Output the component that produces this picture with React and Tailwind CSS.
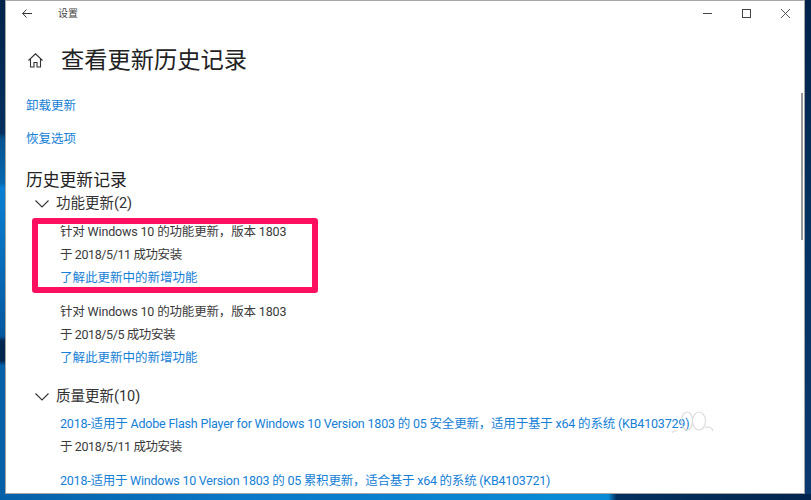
const FONT = "font-['Roboto','Noto_Sans_CJK_SC',sans-serif]";

function Link({ className = "", children }) {
    return <p className={`h-[23px] leading-[23px] text-[12.5px] text-[#1480d6] whitespace-nowrap ${className}`}>{children}</p>;
}

function Line({ className = "", children }) {
    return <p className={`h-[23px] leading-[23px] text-[12.5px] text-[#3a3a3a] whitespace-nowrap ${className}`}>{children}</p>;
}

function GroupTitle({ children }) {
    return (
        <div className="flex items-center h-6 pl-[29px] text-[#333] text-[14.5px]">
            <svg width="14" height="8" viewBox="0 0 14 8" fill="none" stroke="#333" strokeWidth="1.1" className="mr-[7px]">
                <path d="M0.5 0.5L7 7L13.5 0.5" />
            </svg>
            {children}
        </div>
    );
}

function App() {
    return (
        <div className={`flex flex-col w-[811px] h-[500px] overflow-hidden ${FONT}`}>
            <div className="flex h-[494px]">
                <div className="w-[5px] bg-[linear-gradient(to_bottom,#03234a_0%,#04305f_27%,#06528f_28%,#0668b0_37%,#0a80d4_38%,#05589f_68%,#03264f_69%,#03264f_73%,#0560a8_74%,#0560a8_100%)]" />
                <div className="relative flex-1 bg-white border border-[#a6a6a6]">
                    <div className="flex items-center h-6">
                        <svg width="10" height="9" viewBox="0 0 10 9" fill="none" stroke="#333" strokeWidth="1" className="ml-[16px]">
                            <path d="M4.5 0.5L0.7 4.5L4.5 8.5M0.7 4.5H10" />
                        </svg>
                        <span className="ml-[26px] text-[10px] text-[#444]">设置</span>
                        <div className="ml-auto flex items-center gap-[30px] pr-[14px]">
                            <svg width="9" height="9" viewBox="0 0 9 9" stroke="#444" strokeWidth="1"><path d="M0 4.5H9" /></svg>
                            <svg width="9" height="9" viewBox="0 0 9 9" fill="none" stroke="#444" strokeWidth="1"><rect x="0.5" y="0.5" width="8" height="8" /></svg>
                            <svg width="9" height="9" viewBox="0 0 9 9" stroke="#444" strokeWidth="0.9"><path d="M0 0L9 9M9 0L0 9" /></svg>
                        </div>
                    </div>
                    <div className="flex items-center mt-[19px] h-8 pl-[22px]">
                        <svg width="15" height="15" viewBox="0 0 15 15" fill="none" stroke="#333" strokeWidth="1.1">
                            <path d="M0.5 7.5L7.5 0.8L14.5 7.5M2.5 6V14H6V9.5H9V14H12.5V6" />
                        </svg>
                        <h1 className="ml-[18px] text-[23.25px] font-normal text-[#222]">查看更新历史记录</h1>
                    </div>
                    <div className="mt-[18px] pl-[20px] text-[12.5px] text-[#1480d6]">
                        <p className="h-[33px] leading-[23px]">卸载更新</p>
                        <p className="leading-[23px]">恢复选项</p>
                    </div>
                    <h2 className="mt-[18px] pl-[20px] text-[16.8px] leading-6 font-normal text-[#222]">历史更新记录</h2>
                    <GroupTitle>功能更新(2)</GroupTitle>
                    <div className="relative mt-[4px] ml-[54px]">
                        <Line className="tracking-[-0.16px]">针对 Windows 10 的功能更新，版本 1803</Line>
                        <Line className="tracking-[-0.4px]">于 2018/5/11 成功安装</Line>
                        <Link>了解此更新中的新增功能</Link>
                        <div className="absolute -top-[2px] -left-[28px] w-[286px] h-[75px] border-[6px] border-[#fe0f5f] rounded-[3px]" />
                    </div>
                    <div className="mt-[11px] ml-[54px]">
                        <Line className="tracking-[-0.16px]">针对 Windows 10 的功能更新，版本 1803</Line>
                        <Line className="tracking-[-0.4px]">于 2018/5/5 成功安装</Line>
                        <Link>了解此更新中的新增功能</Link>
                    </div>
                    <div className="mt-[16px]">
                        <GroupTitle>质量更新(10)</GroupTitle>
                    </div>
                    <div className="mt-[3px] ml-[54px]">
                        <Link className="tracking-[-0.19px]">2018-适用于 Adobe Flash Player for Windows 10 Version 1803 的 05 安全更新，适用于基于 x64 的系统 (KB4103729)</Link>
                        <Line className="tracking-[-0.4px]">于 2018/5/11 成功安装</Line>
                        <div className="mt-[11px]">
                            <Link className="tracking-[-0.23px]">2018-适用于 Windows 10 Version 1803 的 05 累积更新，适合基于 x64 的系统 (KB4103721)</Link>
                        </div>
                    </div>
                    <div className="absolute right-[1px] top-[92px] h-[147px] w-[2px] bg-[#999]" />
                    <svg width="50" height="26" viewBox="0 0 50 26" fill="none" stroke="#dcdcdc" strokeWidth="1.2" className="absolute left-[664px] top-[410px]">
                        <ellipse cx="17" cy="10" rx="5.5" ry="9" />
                        <ellipse cx="29" cy="10" rx="6.5" ry="9" />
                        <path d="M35 17C38 15 42 16 43 20M2 22C3 20 5 19 7 20" />
                    </svg>
                </div>
                <div className="w-[6px] bg-[linear-gradient(to_bottom,#03234a_0%,#043463_50%,#0a3a6e_100%)]" />
            </div>
            <div className="h-[6px] bg-[linear-gradient(to_right,#0560a8_0%,#0a78c8_30%,#0a8ad6_70%,#0a8ad6_75%,#04305f_76%,#03264f_100%)]" />
        </div>
    );
}

export default App;
